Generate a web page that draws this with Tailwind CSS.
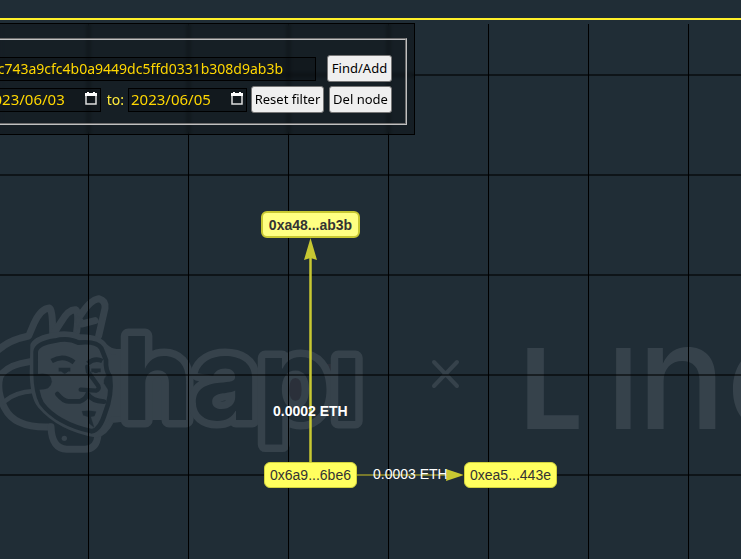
<!DOCTYPE html>
<html lang="en">
<head>
    <meta charset="UTF-8">
    <meta name="viewport" content="width=device-width, initial-scale=1.0">
    <title>Transaction Graph</title>
    <script src="https://cdn.jsdelivr.net/npm/@tailwindcss/browser@4"></script>
</head>
<body class="bg-[#202d36] font-['Liberation_Sans',sans-serif]">
    <div class="relative min-h-screen overflow-hidden flex flex-col">

        <!-- Graph canvas: watermark, grid, edges -->
        <svg class="absolute inset-0 w-full h-full" aria-hidden="true">
            <defs>
                <pattern id="grid" x="88" y="74" width="100" height="100" patternUnits="userSpaceOnUse">
                    <rect width="1" height="100" fill="#000"/>
                    <rect width="100" height="2" fill="#000" fill-opacity=".55"/>
                </pattern>
            </defs>

            <!-- Hapi head -->
            <g transform="translate(0 280) scale(.3333)" fill="none" stroke="#36424b" stroke-width="21" stroke-linejoin="round" stroke-linecap="round">
                <path d="M-10 214Q25 180 86 168L103 128Q123 86 148 84Q158 86 158 160"/>
                <path d="M158 165L184 125Q205 88 226 89Q238 93 230 155"/>
                <path d="M240 108Q270 60 296 56Q318 62 315 85L296 168M245 132L285 122" />
                <path d="M228 108L248 118L226 155Z" fill="#36424b" stroke-width="4"/>
                <path d="M90 245Q20 255 0 290Q-12 335 15 386Q45 445 150 441" />
                <path d="M12 365Q45 336 102 333" stroke-width="14"/>
                <path d="M153 440Q155 506 200 508L255 508Q290 508 294 465"/>
                <path d="M100 195Q112 175 165 166Q205 158 240 172Q295 170 315 200Q330 215 350 216L384 216V415L335 420Q315 460 290 464Q180 445 120 375Q100 350 98 280Z" fill="#36424b" stroke-width="18"/>
                <path d="M107 215Q110 190 165 182Q205 172 235 188Q290 182 304 205L318 240Q316 270 330 290Q337 345 315 400Q300 450 275 454Q170 430 125 370Q108 340 107 280Z" stroke="#202d36" stroke-width="14"/>
                <g stroke="#202d36" stroke-width="13" stroke-linecap="butt">
                    <path d="M155 243Q190 222 222 247" stroke-width="14"/>
                    <path d="M263 250Q285 232 307 243" stroke-width="14"/>
                    <path d="M176 269H211M274 271H302" stroke-width="11"/>
                    <path d="M183 270Q194 290 206 270M276 270Q288 286 299 270" fill="#202d36" stroke-width="3"/>
                    <path d="M262 260L264 275L295 318Q299 328 288 332L242 329" stroke-linecap="round"/>
                    <path d="M172 342Q190 364 205 364H240Q258 357 263 342Q275 363 312 365" stroke-width="14" stroke-linecap="round"/>
                    <path d="M246 394Q265 390 288 395L283 408L272 410L282 442L267 430L264 410L250 406Z" fill="#202d36" stroke-width="1"/>
                    <path d="M110 283Q155 275 155 305Q152 332 112 328Z" fill="#202d36" stroke-width="1"/>
                    <path d="M326 285Q310 290 312 310L325 330Z" fill="#202d36" stroke-width="1"/>
                </g>
                <circle cx="193" cy="475" r="8" fill="#36424b" stroke="none"/>
            </g>

            <!-- Hapi wordmark -->
            <rect x="144" y="362" width="30" height="58" fill="#36424b"/>
            <rect x="280" y="364" width="58" height="40" fill="#2b303a"/>
            <g class="font-['Inter',sans-serif] font-bold text-[116px]" fill="#202d36" stroke="#36424b" stroke-width="15" stroke-linejoin="round" paint-order="stroke">
                <text x="121" y="420">h</text>
                <text x="192" y="420">a</text>
                <text x="258" y="421">p</text>
                <text x="331" y="421">ı</text>
            </g>

            <path d="M434 362L457 386M457 362L434 386" stroke="#36424b" stroke-width="4" stroke-linecap="round"/>

            <!-- Linea wordmark -->
            <g class="font-['Inter',sans-serif]" fill="#36424b">
                <text x="520" y="429" class="text-[111px] font-bold">L</text>
                <text x="608" y="429" class="text-[111px] font-semibold">I</text>
                <text x="637" y="429" class="text-[148px] font-medium">n</text>
                <text x="726" y="429" class="text-[148px] font-medium">e</text>
            </g>

            <rect y="24" width="100%" height="100%" fill="url(#grid)"/>

            <!-- Edges -->
            <path d="M310.5 462V250" stroke="#c8c832" stroke-width="2.5"/>
            <path d="M310.5 238L317 260L310.5 258L304 260Z" fill="#c8c832"/>
            <path d="M357 475H450" stroke="#77782c" stroke-width="2"/>
            <path d="M464 475L446 469L447 475L446 481Z" fill="#c8c832"/>
        </svg>

        <!-- Edge labels -->
        <span class="absolute left-[273px] top-[403px] text-sm leading-4 font-bold text-white">0.0002 ETH</span>
        <span class="absolute left-[373px] top-[466px] text-sm leading-4 text-white">0.0003 ETH</span>

        <!-- Nodes -->
        <div class="absolute left-[261px] top-[211px] w-[99px] h-[27px] flex items-center justify-center rounded-md border-2 border-[#c8c832] bg-[#ffff82] text-sm font-bold text-[#333]">0xa48...ab3b</div>
        <div class="absolute left-[264px] top-[462px] w-[93px] h-[26px] flex items-center justify-center rounded-md border border-[#d2d23c] bg-[#ffff5e] text-sm text-[#333]">0x6a9...6be6</div>
        <div class="absolute left-[464px] top-[462px] w-[93px] h-[26px] flex items-center justify-center rounded-md border border-[#d2d23c] bg-[#ffff5e] text-sm text-[#333]">0xea5...443e</div>

        <header class="h-5 border-b-2 border-[#fff02a]"></header>

        <!-- Filter panel, runs off the left edge -->
        <form class="relative mt-[3px] -ml-8 w-[447px] border border-black bg-black/30 backdrop-blur-[2px] pt-[14px] pb-[9px] pr-[7px] font-['Noto_Sans',sans-serif] text-[13px] text-[#ffeb3b]">
            <fieldset class="border-2 [border-style:groove] border-[#c0c0c0] pt-[15px] pb-[10px] pr-[13px] flex flex-col gap-1">
                <div class="flex items-center justify-end gap-[11px]">
                    <input type="text" aria-label="Address" value="8c743a9cfc4b0a9449dc5ffd0331b308d9ab3b" class="flex-1 min-w-0 h-6 border border-black bg-black/20 pr-8 text-right text-sm text-[#ffd700]">
                    <button type="button" class="w-[65px] h-[27px] rounded-[3px] border border-[#767676] bg-[#efefef] text-black">Find/Add</button>
                </div>
                <div class="flex items-center justify-end">
                    <div class="w-[119px] h-6 flex items-center border border-black bg-black/20 pr-[3px]">
                        <input id="from" type="text" aria-label="From" value="2023/06/03" class="w-[82px] min-w-0 text-right text-[15px] text-[#ffd700]">
                        <svg class="ml-auto mb-[2px] w-3 h-[13px]" viewBox="0 0 12 13"><path d="M1 3H11V12H1Z" fill="none" stroke="#ddd" stroke-width="1.5"/><path d="M0 1H12V4H0ZM2 0H4V2H2ZM8 0H10V2H8Z" fill="#fff"/></svg>
                    </div>
                    <label for="to" class="ml-[6px] mr-1 text-sm text-[#ffeb3b]">to:</label>
                    <div class="w-[119px] h-6 flex items-center border border-black bg-black/20 pl-[2px] pr-[3px]">
                        <input id="to" type="text" value="2023/06/05" class="w-[84px] min-w-0 text-[15px] text-[#ffd700]">
                        <svg class="ml-auto mb-[2px] w-3 h-[13px]" viewBox="0 0 12 13"><path d="M1 3H11V12H1Z" fill="none" stroke="#ddd" stroke-width="1.5"/><path d="M0 1H12V4H0ZM2 0H4V2H2ZM8 0H10V2H8Z" fill="#fff"/></svg>
                    </div>
                    <button type="button" class="ml-1 w-[73px] h-[27px] rounded-[3px] border border-[#767676] bg-[#efefef] text-black">Reset filter</button>
                    <button type="button" class="ml-[5px] w-[63px] h-[27px] rounded-[3px] border border-[#767676] bg-[#efefef] text-black">Del node</button>
                </div>
            </fieldset>
        </form>
    </div>
</body>
</html>
